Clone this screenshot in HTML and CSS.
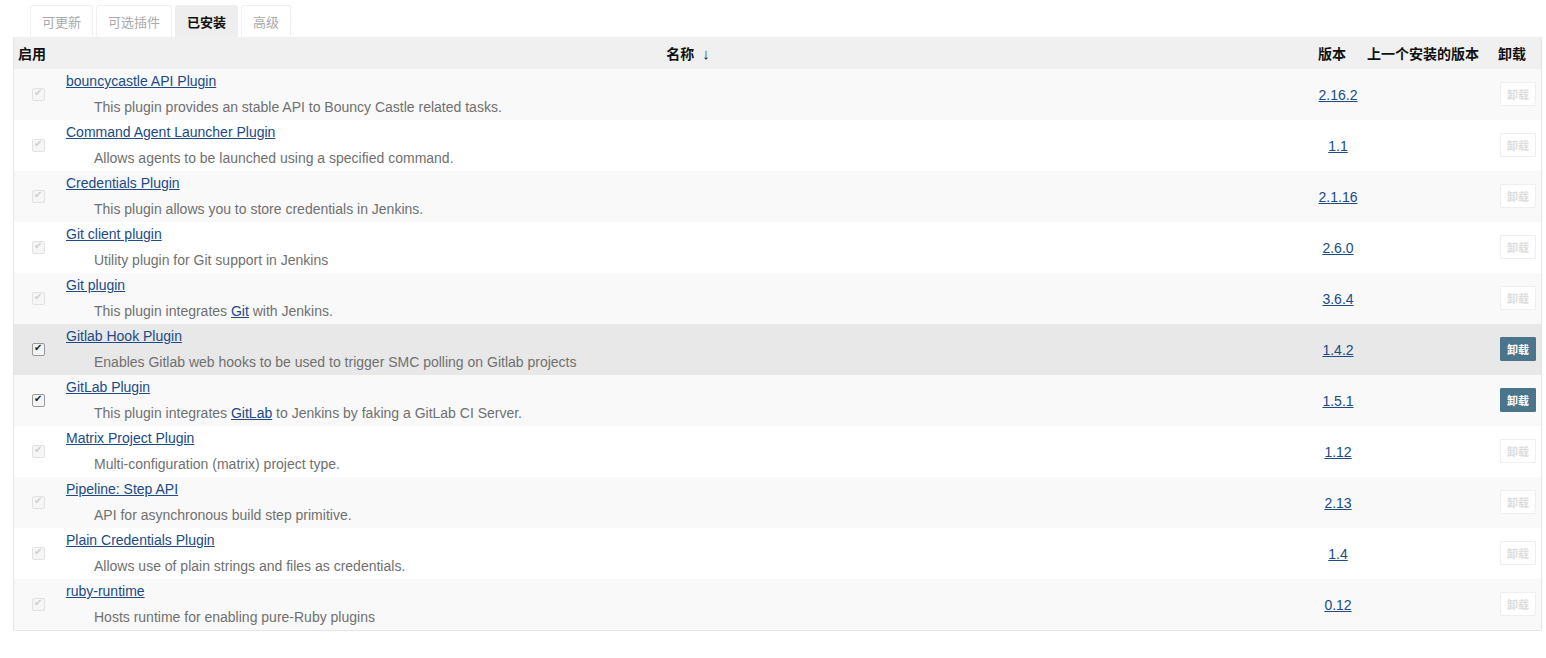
FILE: index.html
```html
<!DOCTYPE html>
<html lang="zh">
<head>
    <meta charset="UTF-8">
    <title>插件管理</title>
    <link rel="stylesheet" href="styles.css">
</head>
<body>
<div class="page">
    <div class="tabs">
        <a class="tab">可更新</a>
        <a class="tab">可选插件</a>
        <a class="tab active">已安装</a>
        <a class="tab">高级</a>
    </div>

    <table class="plugins">
        <colgroup>
            <col class="w-enable">
            <col>
            <col class="w-version">
            <col class="w-prev">
            <col class="w-uninstall">
        </colgroup>
        <thead>
            <tr>
                <th class="col-enable">启用</th>
                <th class="col-name">名称 <span class="sort">&darr;</span></th>
                <th class="col-version">版本</th>
                <th class="col-prev">上一个安装的版本</th>
                <th class="col-uninstall">卸载</th>
            </tr>
        </thead>
        <tbody>
            <tr>
                <td class="col-enable"><span class="check off"></span></td>
                <td class="col-name"><a href="#">bouncycastle API Plugin</a><div class="desc">This plugin provides an stable API to Bouncy Castle related tasks.</div></td>
                <td class="col-version"><a href="#">2.16.2</a></td>
                <td class="col-prev"></td>
                <td class="col-uninstall"><button class="btn" disabled>卸载</button></td>
            </tr>
            <tr>
                <td class="col-enable"><span class="check off"></span></td>
                <td class="col-name"><a href="#">Command Agent Launcher Plugin</a><div class="desc">Allows agents to be launched using a specified command.</div></td>
                <td class="col-version"><a href="#">1.1</a></td>
                <td class="col-prev"></td>
                <td class="col-uninstall"><button class="btn" disabled>卸载</button></td>
            </tr>
            <tr>
                <td class="col-enable"><span class="check off"></span></td>
                <td class="col-name"><a href="#">Credentials Plugin</a><div class="desc">This plugin allows you to store credentials in Jenkins.</div></td>
                <td class="col-version"><a href="#">2.1.16</a></td>
                <td class="col-prev"></td>
                <td class="col-uninstall"><button class="btn" disabled>卸载</button></td>
            </tr>
            <tr>
                <td class="col-enable"><span class="check off"></span></td>
                <td class="col-name"><a href="#">Git client plugin</a><div class="desc">Utility plugin for Git support in Jenkins</div></td>
                <td class="col-version"><a href="#">2.6.0</a></td>
                <td class="col-prev"></td>
                <td class="col-uninstall"><button class="btn" disabled>卸载</button></td>
            </tr>
            <tr>
                <td class="col-enable"><span class="check off"></span></td>
                <td class="col-name"><a href="#">Git plugin</a><div class="desc">This plugin integrates <a href="#">Git</a> with Jenkins.</div></td>
                <td class="col-version"><a href="#">3.6.4</a></td>
                <td class="col-prev"></td>
                <td class="col-uninstall"><button class="btn" disabled>卸载</button></td>
            </tr>
            <tr class="hover">
                <td class="col-enable"><span class="check"></span></td>
                <td class="col-name"><a href="#">Gitlab Hook Plugin</a><div class="desc">Enables Gitlab web hooks to be used to trigger SMC polling on Gitlab projects</div></td>
                <td class="col-version"><a href="#">1.4.2</a></td>
                <td class="col-prev"></td>
                <td class="col-uninstall"><button class="btn">卸载</button></td>
            </tr>
            <tr>
                <td class="col-enable"><span class="check"></span></td>
                <td class="col-name"><a href="#">GitLab Plugin</a><div class="desc">This plugin integrates <a href="#">GitLab</a> to Jenkins by faking a GitLab CI Server.</div></td>
                <td class="col-version"><a href="#">1.5.1</a></td>
                <td class="col-prev"></td>
                <td class="col-uninstall"><button class="btn">卸载</button></td>
            </tr>
            <tr>
                <td class="col-enable"><span class="check off"></span></td>
                <td class="col-name"><a href="#">Matrix Project Plugin</a><div class="desc">Multi-configuration (matrix) project type.</div></td>
                <td class="col-version"><a href="#">1.12</a></td>
                <td class="col-prev"></td>
                <td class="col-uninstall"><button class="btn" disabled>卸载</button></td>
            </tr>
            <tr>
                <td class="col-enable"><span class="check off"></span></td>
                <td class="col-name"><a href="#">Pipeline: Step API</a><div class="desc">API for asynchronous build step primitive.</div></td>
                <td class="col-version"><a href="#">2.13</a></td>
                <td class="col-prev"></td>
                <td class="col-uninstall"><button class="btn" disabled>卸载</button></td>
            </tr>
            <tr>
                <td class="col-enable"><span class="check off"></span></td>
                <td class="col-name"><a href="#">Plain Credentials Plugin</a><div class="desc">Allows use of plain strings and files as credentials.</div></td>
                <td class="col-version"><a href="#">1.4</a></td>
                <td class="col-prev"></td>
                <td class="col-uninstall"><button class="btn" disabled>卸载</button></td>
            </tr>
            <tr>
                <td class="col-enable"><span class="check off"></span></td>
                <td class="col-name"><a href="#">ruby-runtime</a><div class="desc">Hosts runtime for enabling pure-Ruby plugins</div></td>
                <td class="col-version"><a href="#">0.12</a></td>
                <td class="col-prev"></td>
                <td class="col-uninstall"><button class="btn" disabled>卸载</button></td>
            </tr>
        </tbody>
    </table>
</div>
</body>
</html>
```

FILE: styles.css
```css
body {
    margin: 0;
    font-family: "Liberation Sans", "Noto Sans CJK SC", Arial, sans-serif;
    font-size: 14px;
    color: #333;
    background: #fff;
}

.page {
    padding: 5px 4px 0 13px;
}

/* tabs over the table */
.tabs {
    display: flex;
    gap: 3px;
    margin-left: 17px;
    height: 32px;
}

.tab {
    display: flex;
    align-items: center;
    padding: 0 11px;
    font-size: 13px;
    color: #aaa;
    text-decoration: none;
    border: 1px solid #f0f0f0;
    border-bottom: none;
    border-radius: 3px 3px 0 0;
    background: #fff;
}

.tab.active {
    background: #eeeeee;
    color: #111;
    font-weight: bold;
    border-color: #eeeeee;
}

.plugins {
    width: 1529px;
    border-collapse: separate;
    border-spacing: 0;
    border: 1px solid #e6e6e6;
    border-top: none;
    border-radius: 0 0 3px 3px;
    table-layout: fixed;
}

.w-enable { width: 44px; }
.w-version { width: 56px; }
.w-prev { width: 124px; }
.w-uninstall { width: 51px; }

thead th {
    background: #f0f0f0;
    height: 32px;
    padding: 0;
    font-size: 14px;
    font-weight: bold;
    color: #111;
    text-align: left;
    white-space: nowrap;
}

th.col-enable { padding-left: 4px; }
th.col-name { text-align: center; padding-left: 8px; }
th.col-version { padding-left: 8px; }
th.col-prev { padding-left: 1px; }
th.col-uninstall { padding-left: 8px; }

.sort {
    font-weight: normal;
    font-size: 15px;
    color: #222;
    margin-left: 4px;
}

tbody td {
    height: 51px;
    padding: 0;
    vertical-align: middle;
    box-sizing: border-box;
}

tbody tr:nth-child(odd) { background: #f9f9f9; }
tbody tr:nth-child(even) { background: #fff; }
tbody tr.hover { background: #e8e8e8; }

a {
    color: #204a87;
    text-decoration: underline;
}

td.col-name {
    padding: 3px 0 4px 8px;
    vertical-align: top;
}

td.col-name > a {
    display: block;
    width: max-content;
    line-height: 18px;
}

.desc {
    color: #707070;
    line-height: 18px;
    margin-top: 8px;
    padding-left: 28px;
}

td.col-version {
    text-align: center;
}

td.col-enable {
    text-align: center;
    padding-left: 4px;
    padding-bottom: 3px;
}

/* old style checkbox */
.check {
    display: inline-block;
    width: 11px;
    height: 11px;
    border: 1px solid #999;
    background: #f4f4f4;
    border-radius: 2px;
    position: relative;
    vertical-align: middle;
}

.check::after {
    content: "\2714";
    position: absolute;
    left: 1px;
    top: -2px;
    font-size: 10px;
    color: #222;
}

.check.off {
    border-color: #e2e2e2;
    background: #f6f6f6;
}

.check.off::after {
    color: #cfcfcf;
}

td.col-uninstall {
    text-align: right;
    padding-right: 5px;
    padding-bottom: 2px;
}

.btn {
    font-family: "Noto Sans CJK SC", sans-serif;
    font-size: 11px;
    font-weight: bold;
    width: 36px;
    height: 24px;
    padding: 0;
    border: 1px solid #4b758b;
    background: #4b758b;
    color: #fff;
    border-radius: 1px;
}

.btn:disabled {
    background: #fff;
    border-color: #efefef;
    color: #ddd;
}
```
